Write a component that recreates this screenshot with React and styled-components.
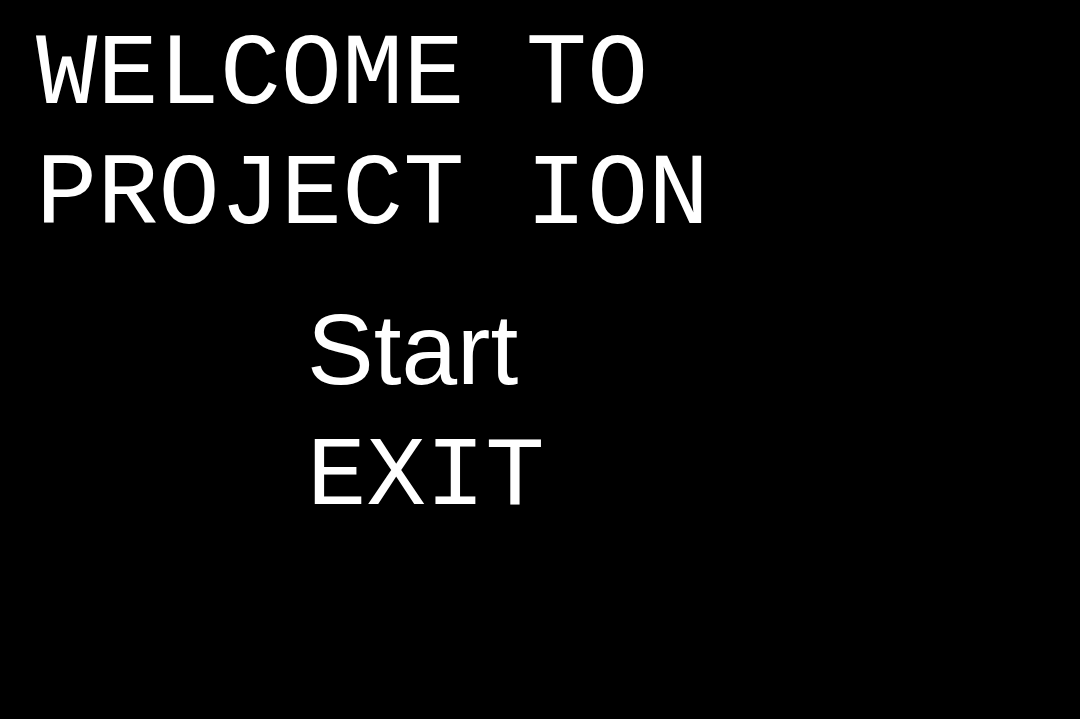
import React from 'react';
import styled, { createGlobalStyle } from 'styled-components';

const GlobalStyle = createGlobalStyle`
  html, body {
    margin: 0;
    padding: 0;
    background: #000;
  }
`;

const Screen = styled.div`
  width: 100vw;
  height: 100vh;
  background: #000;
  color: #fff;
  padding: 16px 0 0 36px;
  box-sizing: border-box;
  display: flex;
  flex-direction: column;
`;

const Title = styled.h1`
  margin: 0;
  font-family: 'Liberation Mono', monospace;
  font-weight: normal;
  font-size: 102px;
  line-height: 120px;
  white-space: pre;
`;

const Menu = styled.div`
  display: flex;
  flex-direction: column;
  gap: 9px;
  margin: 33px 0 0 271px;
`;

const MenuItem = styled.div`
  font-family: ${(p) => (p.$mono ? "'Liberation Mono', monospace" : "'Liberation Sans', Arial, sans-serif")};
  font-size: ${(p) => (p.$mono ? '99px' : '100px')};
  line-height: 120px;
  cursor: pointer;
`;

const App = () => {
  return (
    <Screen>
      <GlobalStyle />
      <Title>
        WELCOME TO
        <br />
        PROJECT ION
      </Title>
      <Menu>
        <MenuItem>Start</MenuItem>
        <MenuItem $mono>EXIT</MenuItem>
      </Menu>
    </Screen>
  );
};

export default App;
